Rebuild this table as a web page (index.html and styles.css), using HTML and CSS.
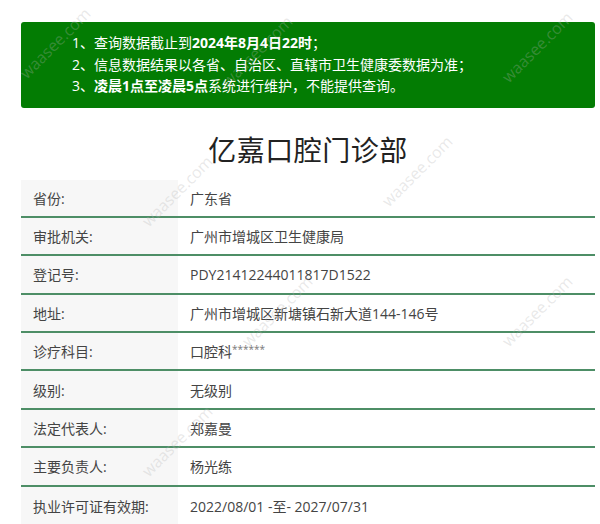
FILE: index.html
```html
<!DOCTYPE html>
<html lang="zh-CN">
<head>
<meta charset="utf-8">
<title>亿嘉口腔门诊部</title>
<link rel="stylesheet" href="styles.css">
</head>
<body>
<div class="page">
  <div class="notice">
    <p>1、查询数据截止到<b>2024年8月4日22时</b>；</p>
    <p>2、信息数据结果以各省、自治区、直辖市卫生健康委数据为准；</p>
    <p>3、<b>凌晨1点至凌晨5点</b>系统进行维护，不能提供查询。</p>
  </div>
  <h1 class="title">亿嘉口腔门诊部</h1>
  <div class="table">
    <div class="row"><div class="label">省份:</div><div class="value">广东省</div></div>
    <div class="row"><div class="label">审批机关:</div><div class="value">广州市增城区卫生健康局</div></div>
    <div class="row"><div class="label">登记号:</div><div class="value">PDY21412244011817D1522</div></div>
    <div class="row"><div class="label">地址:</div><div class="value">广州市增城区新塘镇石新大道144-146号</div></div>
    <div class="row"><div class="label">诊疗科目:</div><div class="value">口腔科<span class="stars">******</span></div></div>
    <div class="row"><div class="label">级别:</div><div class="value">无级别</div></div>
    <div class="row"><div class="label">法定代表人:</div><div class="value">郑嘉曼</div></div>
    <div class="row"><div class="label">主要负责人:</div><div class="value">杨光练</div></div>
    <div class="row last"><div class="label">执业许可证有效期:</div><div class="value">2022/08/01 -至- 2027/07/31</div></div>
  </div>
  <span class="wm wm1">waasee.com</span>
  <span class="wm wm2">waasee.com</span>
  <span class="wm wm3">waasee.com</span>
  <span class="wm wm4">waasee.com</span>
  <span class="wm wm5">waasee.com</span>
  <span class="wm wm6">waasee.com</span>
  <span class="wm wm7">waasee.com</span>
  <span class="wm wm8">waasee.com</span>
</div>
</body>
</html>
```
FILE: styles.css
```css
html, body {
  margin: 0;
  padding: 0;
  background: #ffffff;
}
body {
  font-family: "Open Sans", "Noto Sans CJK SC", sans-serif;
  color: #333333;
  overflow: hidden;
}
.page {
  position: relative;
  width: 574px;
  margin-left: 21px;
  padding-top: 22px;
}
.notice {
  background: #037c03;
  border-radius: 3px;
  color: #ffffff;
  font-size: 14px;
  line-height: 21.5px;
  padding: 10px 10px 11px 51px;
}
.notice p {
  margin: 0;
  white-space: nowrap;
}
.notice b {
  font-weight: 700;
}
.title {
  margin: 0;
  height: 72px;
  text-align: center;
  font-size: 28px;
  font-weight: 400;
  line-height: 28px;
  padding-top: 28px;
  box-sizing: border-box;
  color: #222222;
  letter-spacing: 0.5px;
}
.table {
  display: flex;
  flex-direction: column;
}
.row {
  display: grid;
  grid-template-columns: 157px 1fr;
  height: 38.4px;
  box-sizing: border-box;
  border-bottom: 2px solid #4d8e66;
  font-size: 14px;
}
.row.last {
  border-bottom: none;
}
.label {
  background: #f7f7f7;
  padding-left: 12px;
  display: flex;
  align-items: center;
  color: #444444;
}
.value {
  padding-left: 12px;
  display: flex;
  align-items: center;
  color: #444444;
}
.stars {
  font-size: 10px;
  align-self: center;
  margin-top: -4px;
  color: #777777;
}
.wm {
  position: absolute;
  font-family: "Open Sans", sans-serif;
  font-size: 16px;
  color: rgba(180, 180, 180, 0.3);
  transform: rotate(-45deg);
  pointer-events: none;
  white-space: nowrap;
}
.wm1 { left: -12px; top: 32px; }
.wm2 { left: 190px; top: 40px; }
.wm3 { left: 470px; top: 36px; }
.wm4 { left: 110px; top: 180px; }
.wm5 { left: 350px; top: 160px; }
.wm6 { left: 210px; top: 300px; }
.wm7 { left: 470px; top: 300px; }
.wm8 { left: 110px; top: 430px; }
```
